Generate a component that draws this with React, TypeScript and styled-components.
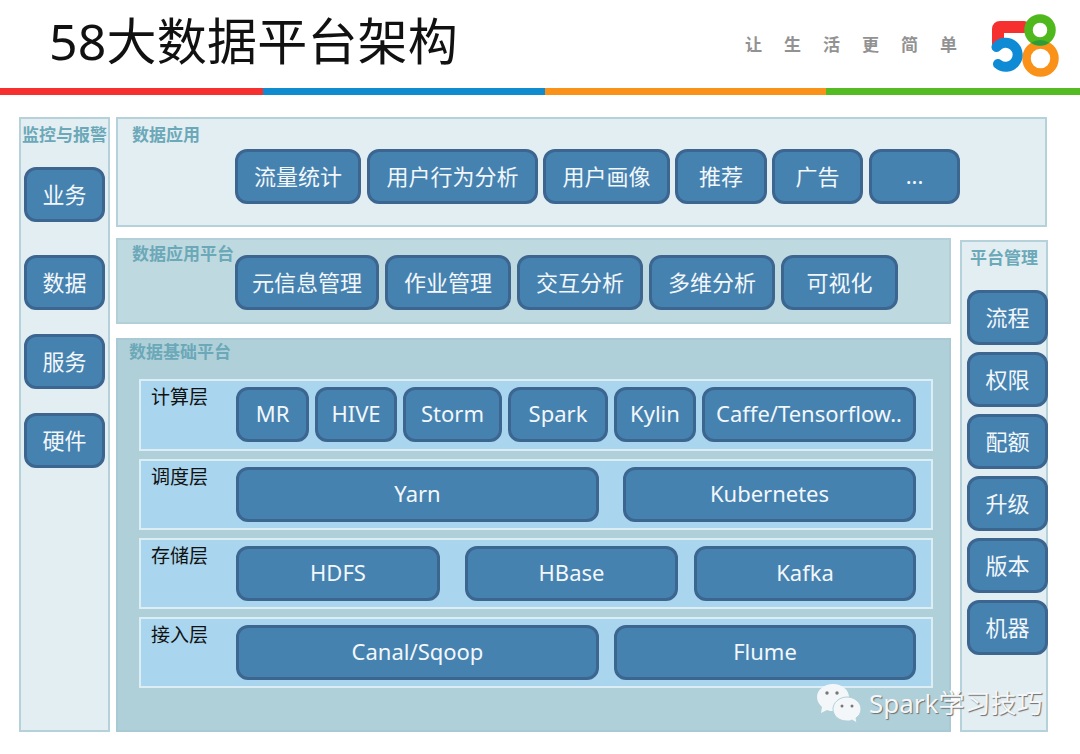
import styled, { createGlobalStyle } from "styled-components";

const GlobalStyle = createGlobalStyle`
  html, body {
    margin: 0;
    padding: 0;
    background: #fff;
    font-family: "Noto Sans", "Noto Sans CJK SC", sans-serif;
  }
`;

const Slide = styled.div`
  position: relative;
  width: 1080px;
  height: 754px;
  overflow: hidden;
`;

const Header = styled.header`
  display: flex;
  align-items: flex-start;
  height: 88px;
  padding-left: 50px;
`;

const Title = styled.h1`
  margin: 0 0 0 -1px;
  flex: 1;
  font-size: 50px;
  line-height: 82px;
  font-weight: 400;
  letter-spacing: 0.2px;
  color: #111;
`;

const Slogan = styled.div`
  margin-top: 33px;
  width: 245px;
  font-size: 17px;
  line-height: 24px;
  font-weight: 700;
  letter-spacing: 22px;
  color: #929292;
  white-space: nowrap;
`;

const Logo = styled.svg`
  width: 72px;
  height: 70px;
  margin: 12px 18px 0 0;
  flex-shrink: 0;
`;

const ColorBar = styled.div`
  display: grid;
  grid-template-columns: 263px 282px 281px 254px;
  height: 7px;
`;

const ColorStripe = styled.div<{ $color: string }>`
  background: ${(p) => p.$color};
`;

const Board = styled.main`
  display: grid;
  grid-template-columns: 91px 835px 91px;
  grid-template-rows: 110px 1fr;
  grid-template-areas:
    "side app app"
    "side center manage";
  column-gap: 6px;
  row-gap: 11px;
  height: 615px;
  margin: 22px 0 0 19px;
`;

const LightPanel = styled.section<{ $area: string }>`
  grid-area: ${(p) => p.$area};
  box-sizing: border-box;
  background: #e3eef3;
  border: 2px solid #b5d2db;
`;

const SidePanel = styled(LightPanel)`
  display: flex;
  flex-direction: column;
  align-items: center;
  padding-top: 4px;
`;

const ManagePanel = styled(SidePanel)`
  margin: 2px 0 0 3px;
`;

const AppPanel = styled(LightPanel)`
  margin-right: 1px;
  padding: 4px 0 0 14px;
`;

const Center = styled.div`
  grid-area: center;
  display: flex;
  flex-direction: column;
  gap: 14px;
`;

const PlatformPanel = styled.section`
  box-sizing: border-box;
  height: 86px;
  padding: 2px 0 0 14px;
  background: #bfd9e0;
  border: 2px solid #b3d0d9;
`;

const BasePanel = styled.section`
  flex: 1;
  box-sizing: border-box;
  padding: 0 16px 0 21px;
  background: #b0d0d9;
  border: 2px solid #a9cad4;
`;

const PanelTitle = styled.h2<{ $height: number }>`
  margin: 0;
  height: ${(p) => p.$height}px;
  font-size: 17px;
  line-height: 24px;
  font-weight: 700;
  color: #6ba8b8;
  white-space: nowrap;
`;

const SideTitle = styled(PanelTitle)`
  margin-bottom: 4px;
`;

const BaseTitle = styled(PanelTitle)`
  margin: 0 0 28px -10px;
`;

const TileRow = styled.div<{ $indent: number }>`
  display: flex;
  padding-left: ${(p) => p.$indent}px;
`;

const Tile = styled.div<{ $width: number; $after?: number }>`
  flex-shrink: 0;
  display: flex;
  align-items: center;
  justify-content: center;
  box-sizing: border-box;
  width: ${(p) => p.$width}px;
  height: 55px;
  padding-bottom: 3px;
  margin-right: ${(p) => p.$after ?? 0}px;
  background: #4682b0;
  border: 3px solid #3c6590;
  border-radius: 12px;
  color: #f2f7fb;
  font-size: 22px;
  white-space: nowrap;
`;

const SideList = styled.div<{ $gap: number; $first: number; $top: number; $left?: number }>`
  display: flex;
  flex-direction: column;
  gap: ${(p) => p.$gap}px;
  margin-top: ${(p) => p.$top}px;
  align-self: ${(p) => (p.$left ? "flex-start" : "center")};
  margin-left: ${(p) => p.$left ?? 0}px;
  & > :first-child {
    margin-bottom: ${(p) => p.$first}px;
  }
`;

const Layers = styled.div`
  display: flex;
  flex-direction: column;
  gap: 8px;
`;

const Layer = styled.div`
  display: flex;
  box-sizing: border-box;
  height: 71px;
  padding: 6px 0 0 10px;
  background: #a9d5ee;
  border: 2px solid #dcedf4;
  &:first-child {
    height: 72px;
    margin-top: -1px;
  }
`;

const LayerName = styled.div`
  width: 85px;
  flex-shrink: 0;
  margin-top: -2px;
  font-size: 19px;
  line-height: 24px;
  color: #111;
`;

const Watermark = styled.div`
  position: absolute;
  left: 816px;
  top: 683px;
  display: flex;
  align-items: center;
  gap: 7px;
  color: #f4f7f9;
  font-size: 26px;
  line-height: 40px;
  text-shadow: 1px 1px 1px #6d6d6d;
  white-space: nowrap;
`;

const WechatIcon = styled.svg`
  width: 46px;
  height: 40px;
  flex-shrink: 0;
`;

const appTiles: [string, number, number][] = [
  ["流量统计", 126, 6],
  ["用户行为分析", 171, 5],
  ["用户画像", 127, 5],
  ["推荐", 92, 5],
  ["广告", 91, 6],
  ["...", 91, 0],
];

const platformTiles: [string, number, number][] = [
  ["元信息管理", 144, 6],
  ["作业管理", 126, 6],
  ["交互分析", 126, 6],
  ["多维分析", 126, 6],
  ["可视化", 117, 0],
];

const layers: { name: string; tiles: [string, number, number][] }[] = [
  {
    name: "计算层",
    tiles: [
      ["MR", 73, 6],
      ["HIVE", 82, 6],
      ["Storm", 99, 6],
      ["Spark", 100, 6],
      ["Kylin", 82, 6],
      ["Caffe/Tensorflow..", 214, 0],
    ],
  },
  {
    name: "调度层",
    tiles: [
      ["Yarn", 363, 24],
      ["Kubernetes", 293, 0],
    ],
  },
  {
    name: "存储层",
    tiles: [
      ["HDFS", 204, 25],
      ["HBase", 213, 16],
      ["Kafka", 222, 0],
    ],
  },
  {
    name: "接入层",
    tiles: [
      ["Canal/Sqoop", 363, 15],
      ["Flume", 302, 0],
    ],
  },
];

const monitorItems = ["业务", "数据", "服务", "硬件"];
const manageItems = ["流程", "权限", "配额", "升级", "版本", "机器"];

function App() {
  return (
    <Slide>
      <GlobalStyle />
      <Header>
        <Title>58大数据平台架构</Title>
        <Slogan>让生活更简单</Slogan>
        <Logo viewBox="0 0 72 70">
          <path d="M8 32 V17 Q8 15 10 15 H34" fill="none" stroke="#f5302e" strokeWidth="12" strokeLinecap="round" strokeLinejoin="round" />
          <circle cx="50.5" cy="46.5" r="14" fill="none" stroke="#fa9119" strokeWidth="8.5" />
          <circle cx="50" cy="18" r="11.5" fill="none" stroke="#4fb81c" strokeWidth="8.5" />
          <path d="M41 30.8 A15.75 15.75 0 0 0 59.5 30.8 A18.25 18.25 0 0 0 41 30.8 Z" fill="#2f9a3a" />
          <path d="M6.5 35 A12 12 0 1 1 8 52" fill="none" stroke="#0f8bd6" strokeWidth="10" strokeLinecap="round" />
        </Logo>
      </Header>
      <ColorBar>
        <ColorStripe $color="#f5302e" />
        <ColorStripe $color="#0f8bd0" />
        <ColorStripe $color="#fa9119" />
        <ColorStripe $color="#55bb22" />
      </ColorBar>
      <Board>
        <SidePanel $area="side">
          <SideTitle $height={24}>监控与报警</SideTitle>
          <SideList $gap={24} $first={9} $top={16}>
            {monitorItems.map((item) => (
              <Tile key={item} $width={81}>{item}</Tile>
            ))}
          </SideList>
        </SidePanel>
        <AppPanel $area="app">
          <PanelTitle $height={26}>数据应用</PanelTitle>
          <TileRow $indent={103}>
            {appTiles.map(([label, width, after]) => (
              <Tile key={label} $width={width} $after={after}>{label}</Tile>
            ))}
          </TileRow>
        </AppPanel>
        <Center>
          <PlatformPanel>
            <PanelTitle $height={13}>数据应用平台</PanelTitle>
            <TileRow $indent={103}>
              {platformTiles.map(([label, width, after]) => (
                <Tile key={label} $width={width} $after={after}>{label}</Tile>
              ))}
            </TileRow>
          </PlatformPanel>
          <BasePanel>
            <BaseTitle $height={12}>数据基础平台</BaseTitle>
            <Layers>
              {layers.map((layer) => (
                <Layer key={layer.name}>
                  <LayerName>{layer.name}</LayerName>
                  <TileRow $indent={0}>
                    {layer.tiles.map(([label, width, after]) => (
                      <Tile key={label} $width={width} $after={after}>{label}</Tile>
                    ))}
                  </TileRow>
                </Layer>
              ))}
            </Layers>
          </BasePanel>
        </Center>
        <ManagePanel $area="manage">
          <SideTitle $height={24}>平台管理</SideTitle>
          <SideList $gap={7} $first={0} $top={16} $left={5}>
            {manageItems.map((item) => (
              <Tile key={item} $width={81}>{item}</Tile>
            ))}
          </SideList>
        </ManagePanel>
      </Board>
      <Watermark>
        <WechatIcon viewBox="0 0 46 40">
          <path d="M17 1 C8 1 1 7 1 14 C1 18 3 21 6 24 L5 30 L11 27 C13 28 15 28 17 28 C26 28 33 22 33 14 C33 7 26 1 17 1 Z" fill="#f4f7f9" />
          <path d="M31 14 C23 14 17 20 17 26 C17 33 23 38 31 38 C33 38 34 38 36 37 L41 40 L40 35 C43 33 45 30 45 26 C45 20 39 14 31 14 Z" fill="#f4f7f9" stroke="#b0d0d9" strokeWidth="1" />
          <circle cx="11" cy="10" r="1.7" fill="#777" />
          <circle cx="21" cy="10" r="1.7" fill="#777" />
          <circle cx="26" cy="23" r="1.5" fill="#777" />
          <circle cx="36" cy="23" r="1.5" fill="#777" />
        </WechatIcon>
        Spark学习技巧
      </Watermark>
    </Slide>
  );
}

export default App;
